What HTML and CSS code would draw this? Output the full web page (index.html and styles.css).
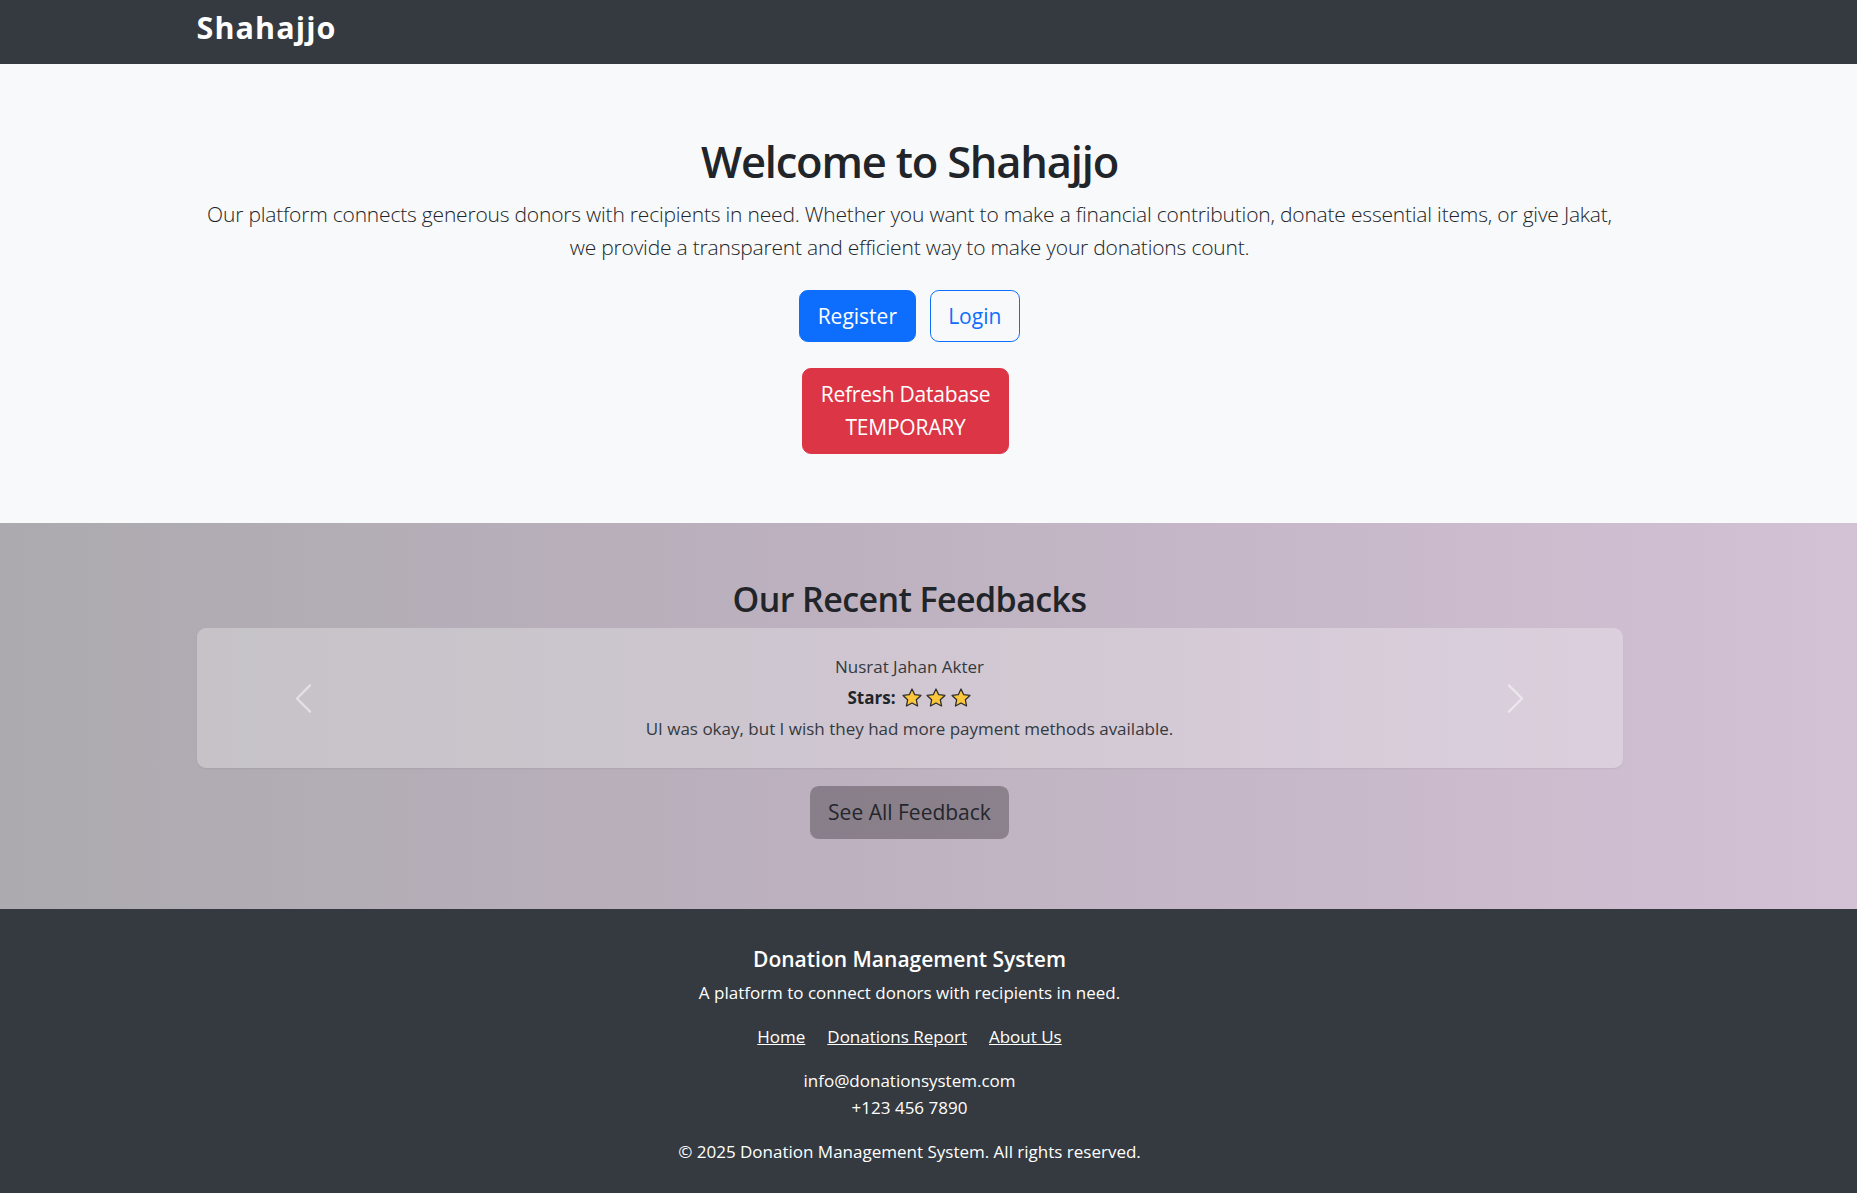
FILE: index.html
```html
<!DOCTYPE html>
<html lang="en">
<head>
<meta charset="utf-8">
<title>Shahajjo</title>
<link rel="stylesheet" href="styles.css">
</head>
<body>
<nav class="navbar">
  <div class="container">
    <a class="brand" href="#">Shahajjo</a>
  </div>
</nav>

<section class="hero">
  <div class="container hero-inner">
    <h1 class="hero-title">Welcome to Shahajjo</h1>
    <p class="lead">Our platform connects generous donors with recipients in need. Whether you want to make a financial contribution, donate essential items, or give Jakat, we provide a transparent and efficient way to make your donations count.</p>
    <div class="actions">
      <a class="btn btn-primary" href="#">Register</a>
      <a class="btn btn-outline" href="#">Login</a>
    </div>
    <form class="refresh-form">
      <button type="button" class="btn btn-danger">Refresh Database<br>TEMPORARY</button>
    </form>
  </div>
</section>

<section class="feedback">
  <div class="container feedback-inner">
    <h2 class="section-title">Our Recent Feedbacks</h2>
    <div class="carousel">
      <button type="button" class="carousel-ctrl" aria-label="Previous">
        <svg class="chev" viewBox="0 0 16 16" width="35" height="35"><path d="M11.354 1.646a.5.5 0 0 1 0 .708L5.707 8l5.647 5.646a.5.5 0 0 1-.708.708l-6-6a.5.5 0 0 1 0-.708l6-6a.5.5 0 0 1 .708 0z"/></svg>
      </button>
      <div class="slide">
        <p class="fb-name">Nusrat Jahan Akter</p>
        <p class="fb-stars"><strong>Stars:</strong><svg class="star" viewBox="0 0 24 24"><path d="M12 2.2l2.95 6.2 6.8.85-5 4.7 1.3 6.75L12 17.4l-6.05 3.3 1.3-6.75-5-4.7 6.8-.85z"/></svg><svg class="star" viewBox="0 0 24 24"><path d="M12 2.2l2.95 6.2 6.8.85-5 4.7 1.3 6.75L12 17.4l-6.05 3.3 1.3-6.75-5-4.7 6.8-.85z"/></svg><svg class="star" viewBox="0 0 24 24"><path d="M12 2.2l2.95 6.2 6.8.85-5 4.7 1.3 6.75L12 17.4l-6.05 3.3 1.3-6.75-5-4.7 6.8-.85z"/></svg></p>
        <p class="fb-text">UI was okay, but I wish they had more payment methods available.</p>
      </div>
      <button type="button" class="carousel-ctrl" aria-label="Next">
        <svg class="chev" viewBox="0 0 16 16" width="35" height="35"><path d="M4.646 1.646a.5.5 0 0 1 .708 0l6 6a.5.5 0 0 1 0 .708l-6 6a.5.5 0 0 1-.708-.708L10.293 8 4.646 2.354a.5.5 0 0 1 0-.708z"/></svg>
      </button>
    </div>
    <a class="btn btn-see" href="#">See All Feedback</a>
  </div>
</section>

<footer class="footer">
  <h5 class="footer-title">Donation Management System</h5>
  <p class="footer-tag">A platform to connect donors with recipients in need.</p>
  <p class="footer-links"><a href="#">Home</a><a href="#">Donations Report</a><a href="#">About Us</a></p>
  <p class="footer-contact">info@donationsystem.com<br>+123 456 7890</p>
  <p class="footer-copy">&copy; 2025 Donation Management System. All rights reserved.</p>
</footer>
</body>
</html>
```
FILE: styles.css
```css
* { box-sizing: border-box; }

html, body {
  margin: 0;
  padding: 0;
}

body {
  font-family: "Open Sans", "Noto Sans", sans-serif;
  font-size: 17px;
  line-height: 26.4px;
  color: #212529;
  background: #f8f9fa;
}

.container {
  width: 1426px;
  margin-left: calc(50% - 732px);
}

/* Navbar */
.navbar {
  background: #343a40;
  height: 64px;
  padding-top: 7px;
}

.brand {
  display: inline-block;
  color: #fff;
  text-decoration: none;
  font-weight: 700;
  font-size: 30.5px;
  line-height: 40px;
  letter-spacing: 1.1px;
}

/* Hero */
.hero {
  background: #f8f9fa;
  padding: 72px 0 69px;
}

.hero-inner {
  display: flex;
  flex-direction: column;
  align-items: center;
  text-align: center;
}

.hero-title {
  margin: 0 0 9px;
  font-size: 43.5px;
  line-height: 52.8px;
  font-weight: 600;
  letter-spacing: -1.2px;
  color: #212529;
}

.lead {
  margin: 0 0 26px;
  font-size: 21px;
  line-height: 33px;
  font-weight: 300;
  letter-spacing: -0.2px;
  color: #212529;
}

.actions {
  display: flex;
  justify-content: center;
  gap: 14px;
}

.btn {
  display: inline-block;
  font-family: inherit;
  font-size: 21px;
  line-height: 33px;
  font-weight: 400;
  padding: 8.8px 17.6px;
  border: 1px solid transparent;
  border-radius: 8.8px;
  text-decoration: none;
  text-align: center;
  cursor: pointer;
}

.btn-primary {
  background: #0d6efd;
  border-color: #0d6efd;
  color: #fff;
}

.btn-outline {
  background: transparent;
  border-color: #0d6efd;
  color: #0d6efd;
}

.refresh-form {
  margin: 26px 8px 0 0;
}

.btn-danger {
  background: #dc3545;
  border-color: #dc3545;
  color: #fff;
  letter-spacing: -0.2px;
}

/* Feedback */
.feedback {
  background: linear-gradient(90deg, #acaaaf 0%, #bdb1bf 45%, #d3c1d5 100%);
  padding: 55px 0 70px;
}

.feedback-inner {
  display: flex;
  flex-direction: column;
  align-items: center;
}

.section-title {
  margin: 0 0 8px;
  font-size: 34px;
  line-height: 42.2px;
  font-weight: 600;
  letter-spacing: -0.6px;
  color: #212529;
}

.carousel {
  width: 100%;
  height: 140px;
  display: flex;
  align-items: stretch;
  background: rgba(255, 255, 255, 0.28);
  border-radius: 9px;
  box-shadow: 0 1px 2px rgba(0, 0, 0, 0.06);
}

.carousel-ctrl {
  width: 15%;
  flex: none;
  display: flex;
  align-items: center;
  justify-content: center;
  background: none;
  border: 0;
  padding: 0;
  opacity: 0.5;
  cursor: pointer;
}

.chev {
  fill: #fff;
  display: block;
}

.slide {
  flex: 1;
  padding: 26px 0;
  text-align: center;
  color: #343a40;
}

.slide p {
  margin: 0 0 4.4px;
}

.slide p.fb-text {
  margin: 0;
}

.fb-stars strong {
  font-weight: 700;
  color: #212529;
}

.star {
  width: 22px;
  height: 22px;
  margin-left: 2.5px;
  vertical-align: -5px;
  fill: #fdc73b;
  stroke: #2d2d2d;
  stroke-width: 1.4;
  stroke-linejoin: round;
}

.fb-stars strong + .star {
  margin-left: 5px;
}

.btn-see {
  margin-top: 18px;
  background: rgba(0, 0, 0, 0.28);
  color: #24262c;
}

/* Footer */
.footer {
  background: #343a40;
  color: #fff;
  text-align: center;
  padding: 37px 38px 29px 0;
}

.footer-title {
  margin: 0 0 8px;
  font-size: 21px;
  line-height: 26.4px;
  font-weight: 600;
}

.footer p {
  margin: 0 0 17.6px;
}

.footer p.footer-copy {
  margin: 0;
}

.footer-links a {
  color: #fff;
  text-decoration: underline;
  margin: 0 11px;
}
```
